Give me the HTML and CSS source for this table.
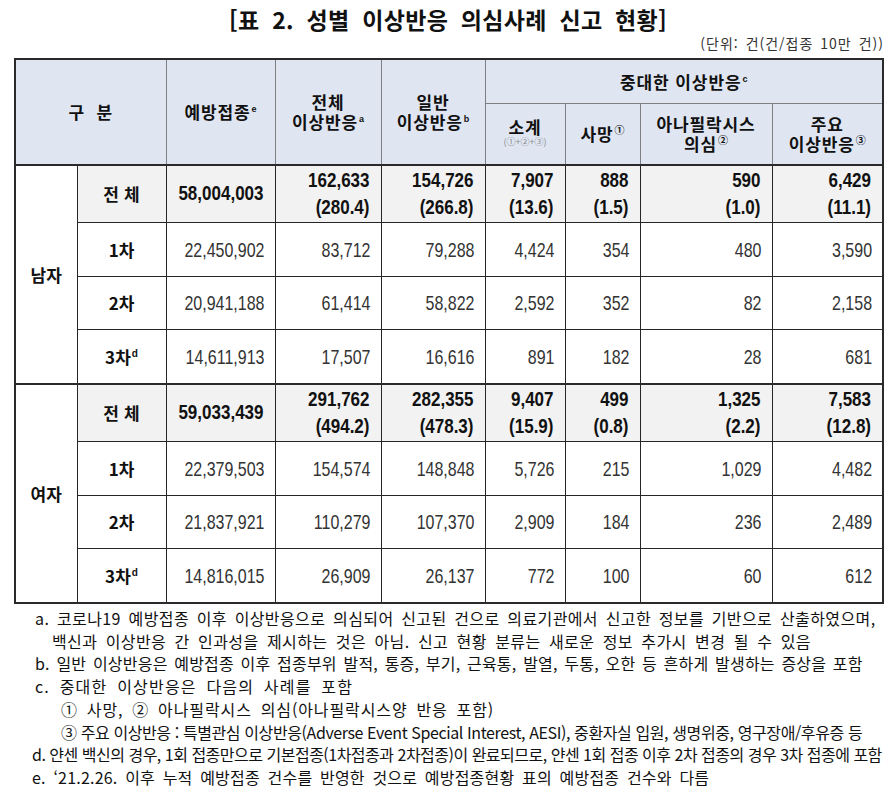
FILE: index.html
```html
<!DOCTYPE html>
<html lang="ko">
<head>
<meta charset="utf-8">
<title>표 2. 성별 이상반응 의심사례 신고 현황</title>
<link rel="stylesheet" href="styles.css">
</head>
<body>
<div class="page">
  <h1 class="title">[표 2. 성별 이상반응 의심사례 신고 현황]</h1>
  <div class="unit">(단위: 건(건/접종 10만 건))</div>
  <table class="grid">
    <colgroup>
      <col class="c-sex"><col class="c-dose"><col class="c-vac"><col class="c-all"><col class="c-gen"><col class="c-sub"><col class="c-death"><col class="c-ana"><col class="c-major">
    </colgroup>
    <thead>
      <tr class="h1">
        <th rowspan="2" colspan="2" class="gubun">구&nbsp;&nbsp;분</th>
        <th rowspan="2">예방접종<sup>e</sup></th>
        <th rowspan="2">전체<br>이상반응<sup>a</sup></th>
        <th rowspan="2">일반<br>이상반응<sup>b</sup></th>
        <th colspan="4" class="serious">중대한 이상반응<sup>c</sup></th>
      </tr>
      <tr class="h2">
        <th class="sub">소계<span class="sum">(①+②+③)</span></th>
        <th>사망<sup class="circ">①</sup></th>
        <th>아나필락시스<br>의심<sup class="circ">②</sup></th>
        <th>주요<br>이상반응<sup class="circ">③</sup></th>
      </tr>
    </thead>
    <tbody class="grp">
      <tr class="tot">
        <th rowspan="4" class="sex">남자</th>
        <th class="lbl sp">전체</th>
        <td><span class="v">58,004,003</span></td>
        <td><span class="v">162,633</span><span class="v">(280.4)</span></td>
        <td><span class="v">154,726</span><span class="v">(266.8)</span></td>
        <td><span class="v">7,907</span><span class="v">(13.6)</span></td>
        <td><span class="v">888</span><span class="v">(1.5)</span></td>
        <td><span class="v">590</span><span class="v">(1.0)</span></td>
        <td><span class="v">6,429</span><span class="v">(11.1)</span></td>
      </tr>
      <tr class="r1"><th class="lbl">1차</th><td><span class="v">22,450,902</span></td><td><span class="v">83,712</span></td><td><span class="v">79,288</span></td><td><span class="v">4,424</span></td><td><span class="v">354</span></td><td><span class="v">480</span></td><td><span class="v">3,590</span></td></tr>
      <tr class="r2"><th class="lbl">2차</th><td><span class="v">20,941,188</span></td><td><span class="v">61,414</span></td><td><span class="v">58,822</span></td><td><span class="v">2,592</span></td><td><span class="v">352</span></td><td><span class="v">82</span></td><td><span class="v">2,158</span></td></tr>
      <tr class="r3"><th class="lbl">3차<sup>d</sup></th><td><span class="v">14,611,913</span></td><td><span class="v">17,507</span></td><td><span class="v">16,616</span></td><td><span class="v">891</span></td><td><span class="v">182</span></td><td><span class="v">28</span></td><td><span class="v">681</span></td></tr>
    </tbody>
    <tbody class="grp">
      <tr class="tot">
        <th rowspan="4" class="sex">여자</th>
        <th class="lbl sp">전체</th>
        <td><span class="v">59,033,439</span></td>
        <td><span class="v">291,762</span><span class="v">(494.2)</span></td>
        <td><span class="v">282,355</span><span class="v">(478.3)</span></td>
        <td><span class="v">9,407</span><span class="v">(15.9)</span></td>
        <td><span class="v">499</span><span class="v">(0.8)</span></td>
        <td><span class="v">1,325</span><span class="v">(2.2)</span></td>
        <td><span class="v">7,583</span><span class="v">(12.8)</span></td>
      </tr>
      <tr class="r1"><th class="lbl">1차</th><td><span class="v">22,379,503</span></td><td><span class="v">154,574</span></td><td><span class="v">148,848</span></td><td><span class="v">5,726</span></td><td><span class="v">215</span></td><td><span class="v">1,029</span></td><td><span class="v">4,482</span></td></tr>
      <tr class="r2"><th class="lbl">2차</th><td><span class="v">21,837,921</span></td><td><span class="v">110,279</span></td><td><span class="v">107,370</span></td><td><span class="v">2,909</span></td><td><span class="v">184</span></td><td><span class="v">236</span></td><td><span class="v">2,489</span></td></tr>
      <tr class="r3"><th class="lbl">3차<sup>d</sup></th><td><span class="v">14,816,015</span></td><td><span class="v">26,909</span></td><td><span class="v">26,137</span></td><td><span class="v">772</span></td><td><span class="v">100</span></td><td><span class="v">60</span></td><td><span class="v">612</span></td></tr>
    </tbody>
  </table>
  <div class="notes">
    <p class="n na">a. 코로나19 예방접종 이후 이상반응으로 의심되어 신고된 건으로 의료기관에서 신고한 정보를 기반으로 산출하였으며,</p>
    <p class="n na2">백신과 이상반응 간 인과성을 제시하는 것은 아님. 신고 현황 분류는 새로운 정보 추가시 변경 될 수 있음</p>
    <p class="n nb">b. 일반 이상반응은 예방접종 이후 접종부위 발적, 통증, 부기, 근육통, 발열, 두통, 오한 등 흔하게 발생하는 증상을 포함</p>
    <p class="n nc">c. 중대한 이상반응은 다음의 사례를 포함</p>
    <p class="n nc1">① 사망, ② 아나필락시스 의심(아나필락시스양 반응 포함)</p>
    <p class="n nc2">③ 주요 이상반응 : 특별관심 이상반응(Adverse Event Special Interest, AESI), 중환자실 입원, 생명위중, 영구장애/후유증 등</p>
    <p class="n nd">d. 얀센 백신의 경우, 1회 접종만으로 기본접종(1차접종과 2차접종)이 완료되므로, 얀센 1회 접종 이후 2차 접종의 경우 3차 접종에 포함</p>
    <p class="n ne">e. ‘21.2.26. 이후 누적 예방접종 건수를 반영한 것으로 예방접종현황 표의 예방접종 건수와 다름</p>
  </div>
</div>
</body>
</html>
```
FILE: styles.css
```css
html, body {
  margin: 0;
  padding: 0;
  background: #ffffff;
}
body {
  font-family: "Noto Sans CJK KR", "Noto Sans", sans-serif;
  color: #111;
}
.page {
  width: 868px;
  padding: 4px 14px 0 14px;
}
.title {
  margin: 0;
  height: 30px;
  font-size: 23px;
  line-height: 30px;
  font-weight: 700;
  text-align: center;
  letter-spacing: 0.3px;
  word-spacing: 6px;
  color: #111;
}
.unit {
  text-align: right;
  font-size: 14px;
  line-height: 18px;
  height: 18px;
  color: #333;
  margin-right: -2px;
  letter-spacing: 1px;
  word-spacing: 2px;
}
.grid {
  margin-top: 6px;
  width: 868px;
  border-collapse: collapse;
  table-layout: fixed;
  border: 2px solid #2a2a2a;
}
.c-sex { width: 62px; }
.c-dose { width: 89px; }
.c-vac { width: 109px; }
.c-all { width: 106px; }
.c-gen { width: 104px; }
.c-sub { width: 80px; }
.c-death { width: 75px; }
.c-ana { width: 132px; }
.c-major { width: 111px; }

.grid th, .grid td {
  border: 1px solid #262626;
  padding: 0;
}
.grid thead th {
  background: #dfe6f2;
  border-color: #7d7f84;
  font-size: 17px;
  line-height: 20px;
  font-weight: 700;
  color: #111;
  text-align: center;
  vertical-align: middle;
  letter-spacing: 0.9px;
}
.grid thead tr.h1 { height: 44px; }
.grid thead tr.h2 { height: 62px; }
.grid thead tr.h2 th { border-bottom: 2px solid #2a2a2a; }
.grid thead th.gubun, .grid thead tr.h1 th[rowspan] { border-bottom: 2px solid #2a2a2a; }
.grid thead .serious { padding-top: 2px; }
.grid thead th.sub { padding-bottom: 4px; }
.grid thead sup {
  font-size: 9px;
  line-height: 0;
  vertical-align: 7px;
  font-family: "Liberation Sans", sans-serif;
  font-weight: 700;
  margin-left: 1px;
  letter-spacing: 0;
}
.grid thead sup.circ {
  font-family: "Noto Sans CJK KR", sans-serif;
  font-size: 10px;
  vertical-align: 7px;
}
.sum {
  display: block;
  font-size: 9px;
  line-height: 10px;
  font-weight: 400;
  color: #8a8a8a;
  letter-spacing: 0;
}

.grid tbody.grp { border-top: 2px solid #2a2a2a; }
.grid tbody td {
  text-align: right;
  padding-right: 10px;
  font-family: "Liberation Sans", "Arial", sans-serif;
  font-size: 16px;
  line-height: 27px;
  color: #333;
  vertical-align: middle;
  white-space: nowrap;
}
.v {
  display: inline-block;
  transform: scaleY(1.3);
}
.grid tbody tr.tot { height: 57px; }
.grid tbody tr.r1 { height: 54px; }
.grid tbody tr.r2 { height: 53px; }
.grid tbody tr.r3 { height: 55px; }
.grid tbody tr.tot td {
  background: #f2f2f2;
  font-weight: 700;
  font-size: 17px;
  color: #111;
  padding-right: 11px;
}
.grid tbody tr.tot .v {
  display: block;
  transform: scaleY(1.22);
}
.grid tbody tr.tot th.lbl { background: #f2f2f2; }
.grid tbody th {
  font-size: 17px;
  font-weight: 700;
  text-align: center;
  vertical-align: middle;
  color: #111;
  background: #fff;
}
.grid tbody th.sp { letter-spacing: 5px; text-indent: 5px; }
.grid tbody th sup {
  font-family: "Liberation Sans", sans-serif;
  font-size: 10px;
  line-height: 0;
  vertical-align: 7px;
  margin-left: 1px;
}

.notes {
  margin-top: 3px;
  font-size: 16px;
  line-height: 22.7px;
  color: #111;
}
.n {
  margin: 0;
  white-space: nowrap;
  letter-spacing: 0.4px;
  word-spacing: 3.5px;
}
.na, .nb, .nc { padding-left: 21px; }
.na { word-spacing: 2.8px; }
.nb { word-spacing: 2px; letter-spacing: 0.2px; }
.na2 { padding-left: 38px; }
.nc { letter-spacing: 1.2px; word-spacing: 4px; }
.nc1, .nc2 { padding-left: 47px; }
.nc1 { letter-spacing: 0.9px; }
.nc2 { letter-spacing: -0.4px; word-spacing: 0; }
.nd { letter-spacing: -0.5px; word-spacing: 0; }
.nd, .ne { padding-left: 18px; }
.ne { letter-spacing: 0.2px; word-spacing: 3px; }
```
